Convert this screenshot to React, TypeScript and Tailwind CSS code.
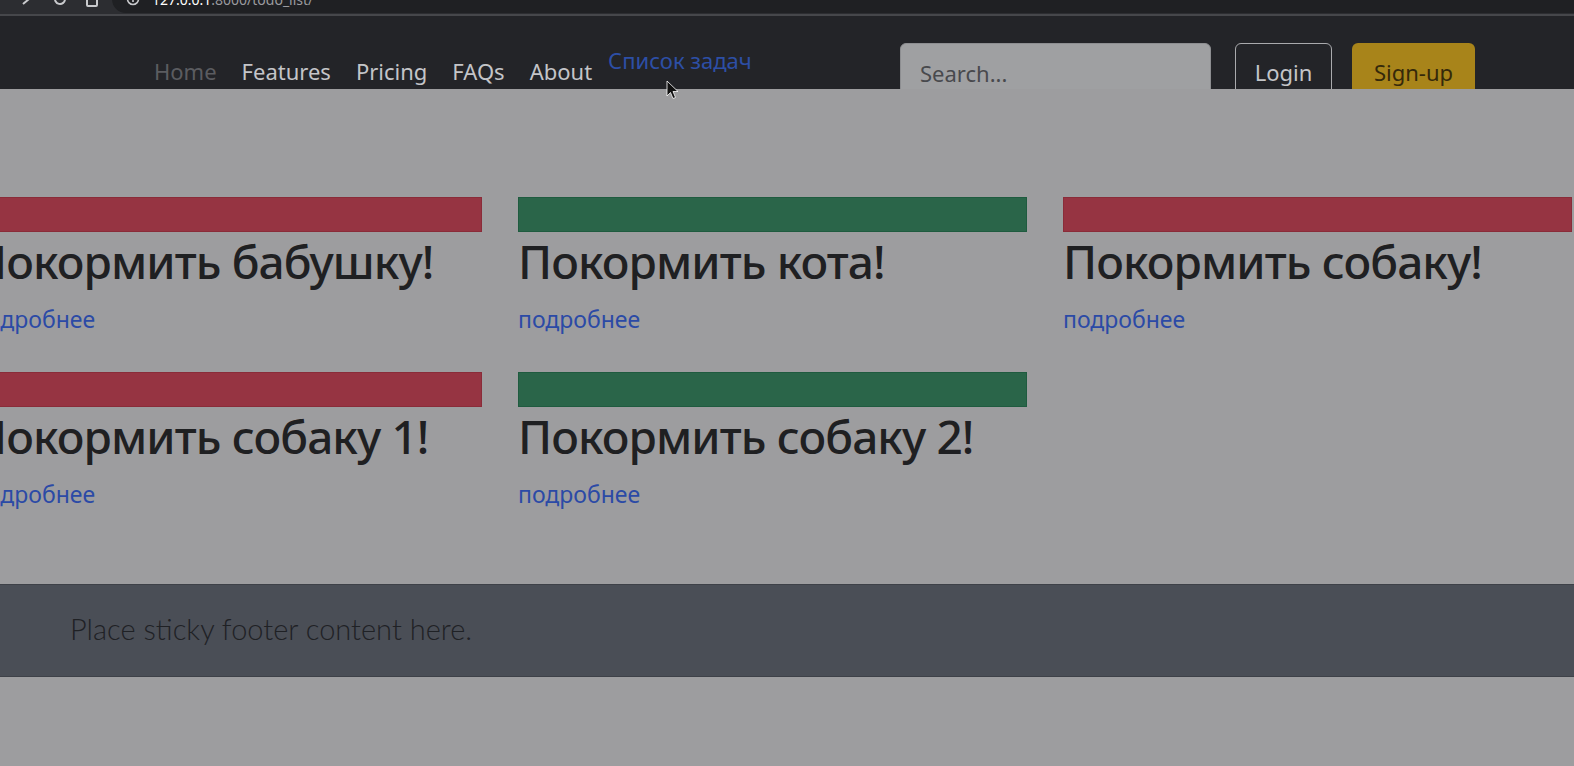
import React from "react";

const tasks = [
  { title: "Покормить бабушку!", done: false },
  { title: "Покормить кота!", done: true },
  { title: "Покормить собаку!", done: false },
  { title: "Покормить собаку 1!", done: false },
  { title: "Покормить собаку 2!", done: true },
];

const BrowserBar = () => (
  <div className="h-[16px] bg-[#2c2d31] border-b-2 border-[#46474b] overflow-hidden">
    <div className="flex items-center h-[28px] -mt-[15px] text-[#c9cacd]">
      <svg className="ml-[20px]" width="12" height="14" viewBox="0 0 12 14" fill="none" stroke="currentColor" strokeWidth="2">
        <path d="M3 2l6 5-6 5" />
      </svg>
      <svg className="ml-[20px]" width="16" height="16" viewBox="0 0 16 16" fill="none" stroke="currentColor" strokeWidth="2">
        <path d="M13 8a5 5 0 1 1-2-4" />
        <path d="M12 1v4H8" />
      </svg>
      <svg className="ml-[18px]" width="12" height="16" viewBox="0 0 12 16" fill="none" stroke="currentColor" strokeWidth="2">
        <rect x="1" y="2" width="10" height="13" rx="1" />
      </svg>
      <div className="ml-[14px] flex items-center h-[28px] flex-1 rounded-l-full bg-[#1f2023] pl-[14px]">
        <svg width="14" height="14" viewBox="0 0 14 14" fill="none" stroke="currentColor" strokeWidth="1.6">
          <circle cx="7" cy="7" r="5.5" />
          <path d="M7 6v4" />
        </svg>
        <span className="ml-[12px] text-[14px] font-['Noto_Sans',sans-serif]">
          <span className="text-white">127.0.0.1</span>
          <span className="text-[#9a9b9f]">:8000/todo_list/</span>
        </span>
      </div>
    </div>
  </div>
);

const Navbar = () => (
  <nav className="h-[73px] bg-[#232428] overflow-hidden flex items-start pl-[154px] pr-[99px] pt-[27px]">
    <div className="flex items-start text-[22px] leading-[33px] mt-[12px]">
      <a className="text-[#5b5c60] mr-[25px]">Home</a>
      <a className="text-[#c4c5c8] mr-[25px]">Features</a>
      <a className="text-[#c4c5c8] mr-[25px]">Pricing</a>
      <a className="text-[#c4c5c8] mr-[25px]">FAQs</a>
      <a className="text-[#c4c5c8] mr-[16px]">About</a>
      <a className="text-[#2d4fa6] -mt-[11px]">Список задач</a>
    </div>
    <div className="ml-auto flex items-start">
      <div className="w-[311px] h-[60px] rounded-[6px] bg-[#9fa0a2] border border-[#8d8e91] pl-[19px] pt-[13px] text-[22px] leading-[33px] text-[#48494d]">
        Search...
      </div>
      <button className="ml-[24px] w-[97px] h-[60px] rounded-[6px] border border-[#a9aaad] text-[22px] leading-[33px] pb-[1px] text-[#c4c5c8]">
        Login
      </button>
      <button className="ml-[20px] w-[123px] h-[60px] rounded-[6px] bg-[#a8841a] text-[22px] leading-[33px] pb-[1px] text-[#35290a]">
        Sign-up
      </button>
    </div>
  </nav>
);

const TaskCard = ({ title, done }: { title: string; done: boolean }) => (
  <div>
    <div
      className={
        done
          ? "h-[35px] bg-[#2a6549] border border-[#1f5b3f]"
          : "h-[35px] bg-[#963442] border border-[#8a2c39]"
      }
    />
    <h3 className="mt-[2px] text-[46px] leading-[55px] font-medium tracking-[-0.9px] text-[#1f2022] whitespace-nowrap">
      {title}
    </h3>
    <a className="block mt-[14px] text-[23px] leading-[33px] text-[#2b4aa6]">подробнее</a>
  </div>
);

export default function App() {
  return (
    <div className="relative w-full h-[766px] overflow-hidden bg-[#9d9d9f] font-['Noto_Sans','Open_Sans',sans-serif]">
      <BrowserBar />
      <Navbar />
      <main className="h-[495px] pt-[108px] overflow-hidden">
        <div className="-ml-[27px] grid grid-cols-[509px_509px_509px] gap-x-[36px] gap-y-[36px]">
          {tasks.map((t) => (
            <TaskCard key={t.title} title={t.title} done={t.done} />
          ))}
        </div>
      </main>
      <footer className="h-[93px] bg-[#4a4e56] border-y border-[#3e4148] pl-[70px] pt-[27px]">
        <p className="text-[29px] leading-[34px] font-light text-[#1f2125] font-['Lato','Open_Sans',sans-serif]">
          Place sticky footer content here.
        </p>
      </footer>
      <svg className="absolute left-[666px] top-[80px]" width="13" height="20" viewBox="0 0 13 20">
        <path d="M1 1v15l3.5-3.5 2.5 6 2.5-1-2.5-6h5z" fill="#111" stroke="#fff" strokeWidth="0.8" />
      </svg>
    </div>
  );
}
